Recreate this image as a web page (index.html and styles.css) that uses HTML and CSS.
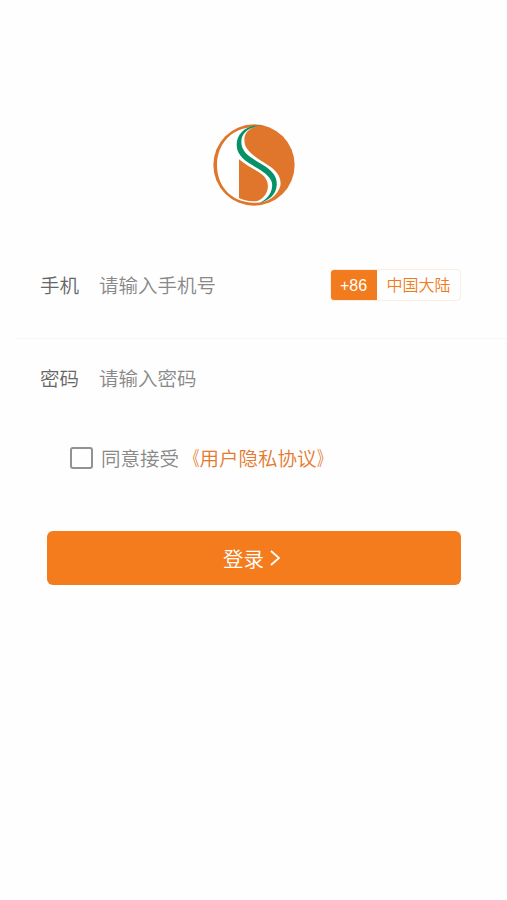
FILE: index.html
```html
<!DOCTYPE html>
<html lang="zh-CN">
<head>
<meta charset="utf-8">
<title>登录</title>
<link rel="stylesheet" href="styles.css">
</head>
<body>
<main class="login">
  <svg class="logo" viewBox="0 0 300 294" aria-hidden="true">
    <circle cx="150" cy="147" r="122" fill="#df762b"/>
    <path d="M150 34 C 82 34 39 86 39 147 C 39 207 78 257 145 260 C 190 264 219 241 229 210 C 234 178 212 159 181 140 C 145 117 121 101 121 72 C 121 48 137 36 164 28 Z" fill="#fff"/>
    <path d="M105 130 C 137 158 177 167 188 193 C 199 219 184 246 160 255 C 138 258 119 253 105 246 Z" fill="#df762b"/>
    <path d="M172 28 C 127 27 98 52 98 87 C 98 127 142 144 170 163 C 197 181 207 195 204 214 C 202 235 187 252 165 261 C 196 254 216 234 218 209 C 221 179 202 163 177 147 C 145 126 112 113 112 78 C 112 51 132 34 172 28 Z" fill="#079169"/>
  </svg>
  <form class="form">
    <div class="row phone">
      <label class="label">手机</label>
      <span class="placeholder">请输入手机号</span>
      <div class="region"><span class="code">+86</span><span class="country">中国大陆</span></div>
    </div>
    <div class="row password">
      <label class="label">密码</label>
      <span class="placeholder">请输入密码</span>
    </div>
    <div class="agree">
      <span class="checkbox"></span>
      <span class="agree-text">同意接受</span><span class="policy"><span class="bracket open">《</span>用户隐私协议<span class="bracket close">》</span></span>
    </div>
    <button class="submit" type="button">
      <span>登录</span>
      <svg class="arrow" viewBox="0 0 12 18" aria-hidden="true"><path d="M2 2 L10 9 L2 16" fill="none" stroke="#fff" stroke-width="1.8"/></svg>
    </button>
  </form>
</main>
</body>
</html>
```
FILE: styles.css
```css
* { box-sizing: border-box; }
body {
  margin: 0;
  background: #fefefe;
  font-family: "Liberation Sans", "Noto Sans CJK SC", sans-serif;
  font-size: 19.5px;
  font-weight: 350;
  color: #888;
}
.login {
  height: 900px;
  padding-top: 116px;
}
.logo {
  display: block;
  width: 100px;
  height: 98px;
  margin-left: 204px;
}
.row {
  display: flex;
  align-items: center;
  margin-left: 16px;
  padding-left: 24px;
}
.label,
.placeholder,
.agree-text,
.policy { padding-bottom: 2px; }
.phone {
  height: 107px;
  margin-top: 18px;
  padding-right: 46px;
  border-bottom: 1px solid #f7f7f7;
}
.password { height: 79px; }
.label {
  width: 59px;
  color: #666;
}
.region {
  display: flex;
  width: 131px;
  height: 32px;
  margin-left: auto;
  border: 1px solid #fbeee2;
  border-radius: 4px;
  overflow: hidden;
  font-size: 16px;
  line-height: 30px;
  text-align: center;
}
.code {
  width: 47px;
  margin: -1px 0 -1px -1px;
  line-height: 33px;
  background: #f27b1d;
  color: #fff;
}
.country {
  flex: 1;
  line-height: 32px;
  color: #f27b1d;
}
.agree {
  display: flex;
  align-items: center;
  height: 40px;
  margin: 20px 0 0 70px;
}
.checkbox {
  width: 23px;
  height: 22px;
  margin-right: 8px;
  border: 2px solid #929292;
  border-radius: 3px;
}
.policy {
  margin-left: 1px;
  color: #e5792d;
}
.bracket {
  display: inline-block;
  transform: scaleX(.7);
}
.open { transform-origin: right; }
.close { transform-origin: left; }
.submit {
  display: flex;
  align-items: center;
  justify-content: center;
  gap: 5px;
  width: 414px;
  height: 54px;
  margin: 53px 0 0 47px;
  padding: 0 4px 0 0;
  border: 0;
  border-radius: 6px;
  background: #f47c1d;
  color: #fff;
  font: inherit;
  font-size: 20.5px;
}
.arrow {
  width: 12px;
  height: 18px;
}
```
